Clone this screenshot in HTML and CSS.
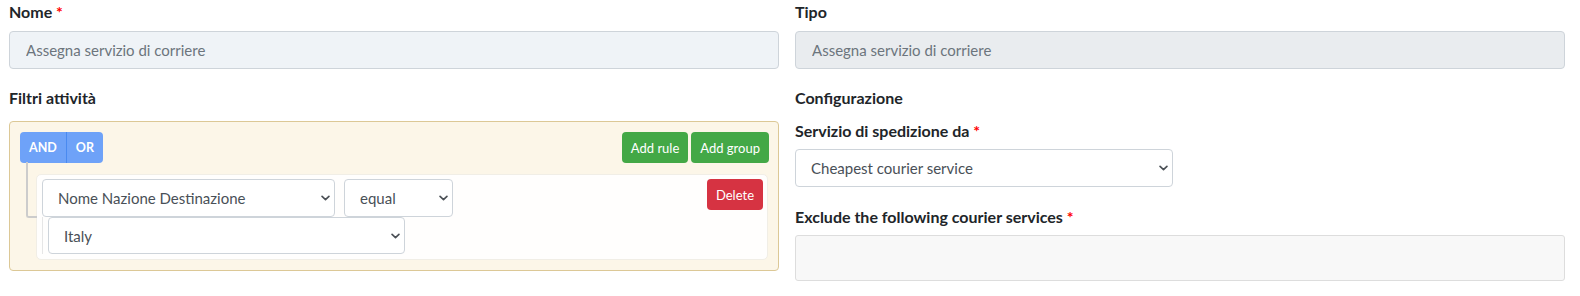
FILE: index.html
```html
<!DOCTYPE html>
<html lang="it">
<head>
    <meta charset="UTF-8">
    <meta name="viewport" content="width=device-width, initial-scale=1.0">
    <title>Assegna servizio di corriere</title>
    <link rel="stylesheet" href="styles.css">
</head>
<body>
    <div class="page">
        <div class="form-grid">
            <div class="field">
                <label class="field-label" for="nome">Nome <span class="req">*</span></label>
                <input type="text" id="nome" class="form-control input-readonly" value="Assegna servizio di corriere" readonly>
            </div>

            <div class="field">
                <label class="field-label" for="tipo">Tipo</label>
                <input type="text" id="tipo" class="form-control input-disabled" value="Assegna servizio di corriere" disabled>
            </div>

            <div class="field">
                <label class="field-label label-filters">Filtri attività</label>

                <!-- costruttore filtri -->
                <div class="qb-group">
                    <div class="qb-header">
                        <div class="cond-group">
                            <button class="btn-cond">AND</button>
                            <button class="btn-cond">OR</button>
                        </div>
                        <div class="group-actions">
                            <button class="btn btn-success">Add rule</button>
                            <button class="btn btn-success">Add group</button>
                        </div>
                    </div>

                    <div class="qb-rules">
                        <div class="qb-rule">
                            <div class="rule-top">
                                <select class="rule-select rule-filter">
                                    <option>Nome Nazione Destinazione</option>
                                </select>
                                <select class="rule-select rule-operator">
                                    <option>equal</option>
                                </select>
                                <button class="btn btn-danger">Delete</button>
                            </div>
                            <div class="rule-value">
                                <select class="rule-select value-select">
                                    <option>Italy</option>
                                </select>
                            </div>
                        </div>
                    </div>
                </div>
            </div>

            <div class="field">
                <div class="field-label label-section">Configurazione</div>

                <label class="field-label label-small-gap" for="servizio">Servizio di spedizione da <span class="req">*</span></label>
                <select id="servizio" class="rule-select select-service">
                    <option>Cheapest courier service</option>
                </select>

                <label class="field-label label-exclude">Exclude the following courier services <span class="req">*</span></label>
                <div class="multi-box"></div>
            </div>
        </div>
    </div>
</body>
</html>
```

FILE: styles.css
```css
body {
    margin: 0;
    font-family: Lato, 'Open Sans', Arial, sans-serif;
    font-size: 16px;
    color: #212529;
    background-color: white;
}

.page {
    padding: 0 15px 0 9px;
}

.form-grid {
    display: grid;
    grid-template-columns: 1fr 1fr;
    column-gap: 16px;
    row-gap: 17px;
}

.field {
    display: flex;
    flex-direction: column;
    align-items: flex-start;
}

.field-label {
    display: block;
    font-weight: 700;
    line-height: 24px;
    margin-bottom: 7px;
    color: #212529;
}

.req {
    color: #f00;
}

.label-filters {
    margin-bottom: 11px;
}

.label-section {
    margin-bottom: 9px;
}

.label-small-gap {
    margin-bottom: 6px;
}

.label-exclude {
    margin-top: 18px;
    margin-bottom: 6px;
}

.form-control {
    width: 100%;
    height: 38px;
    padding: 0 16px;
    font-family: inherit;
    font-size: 15px;
    color: #6c757d;
    border: 1px solid #ced4da;
    border-radius: 4px;
    box-sizing: border-box;
}

.input-readonly {
    background-color: #eff3f7;
}

.input-disabled {
    background-color: #e9ecef;
}

/* query builder */
.qb-group {
    width: 100%;
    box-sizing: border-box;
    padding: 10px;
    background-color: #fcf6e8;
    border: 1px solid #dcc896;
    border-radius: 4px;
}

.qb-header {
    display: flex;
    justify-content: space-between;
    align-items: flex-start;
}

.cond-group {
    display: flex;
}

.btn-cond {
    height: 31px;
    padding: 0 9px;
    border: none;
    font-family: inherit;
    font-size: 12.5px;
    font-weight: 700;
    color: white;
    background-color: #6ea2f8;
}

.btn-cond:first-child {
    border-radius: 4px 0 0 4px;
    border-right: 1px solid #4a8af0;
}

.btn-cond:last-child {
    border-radius: 0 4px 4px 0;
}

.group-actions {
    display: flex;
    gap: 3px;
    margin-right: -1px;
}

.btn {
    height: 31px;
    padding: 0 9px;
    border: none;
    border-radius: 4px;
    font-family: inherit;
    font-size: 13px;
    color: white;
}

.btn-success {
    background-color: #43a846;
}

.btn-danger {
    background-color: #d63342;
    margin-left: auto;
}

.qb-rules {
    padding: 11px 0 0 16px;
}

.qb-rule {
    position: relative;
    padding: 4px 4px 5px 5px;
    background-color: rgba(255, 255, 255, 0.9);
    border: 1px solid #f1eee6;
    border-radius: 5px;
}

.qb-rule::before {
    content: '';
    position: absolute;
    left: -11px;
    top: -13px;
    width: 9px;
    height: calc(50% + 12px);
    border-left: 2px solid #cccccc;
    border-bottom: 2px solid #cccccc;
    border-bottom-left-radius: 3px;
}

.rule-top {
    display: flex;
    align-items: flex-start;
    gap: 9px;
}

.rule-select {
    height: 38px;
    padding: 0 24px 0 15px;
    font-family: inherit;
    font-size: 15px;
    color: #495057;
    background-color: white;
    border: 1px solid #ced4da;
    border-radius: 4px;
    appearance: none;
    -webkit-appearance: none;
    background-image: url("data:image/svg+xml,%3Csvg xmlns='http://www.w3.org/2000/svg' viewBox='0 0 10 6'%3E%3Cpath d='M1.2 1.2L5 4.8L8.8 1.2' fill='none' stroke='%234a4f55' stroke-width='1.8' stroke-linecap='round' stroke-linejoin='round'/%3E%3C/svg%3E");
    background-repeat: no-repeat;
    background-size: 9px 6px;
    background-position: right 4px center;
}

.rule-filter {
    width: 293px;
}

.rule-operator {
    width: 109px;
}

.rule-value {
    padding-left: 5px;
    border-left: 1px solid #e6e6e6;
}

.value-select {
    width: 357px;
    height: 37px;
}

.select-service {
    width: 378px;
}

.multi-box {
    width: 100%;
    height: 46px;
    box-sizing: border-box;
    background-color: #f8f8f8;
    border: 1px solid #dddddd;
    border-radius: 3px;
}
```
